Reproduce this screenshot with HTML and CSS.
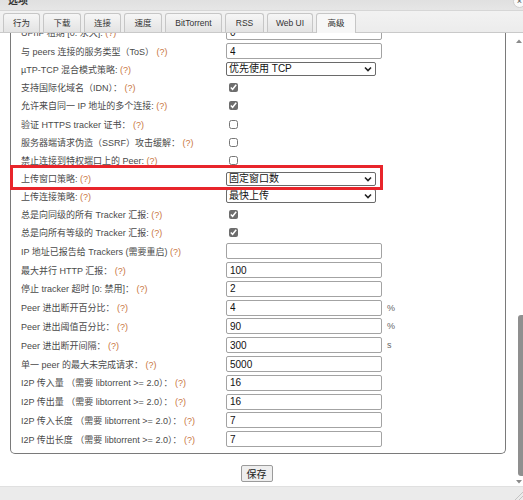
FILE: index.html
```html
<!DOCTYPE html>
<html lang="zh-CN">
<head>
<meta charset="utf-8">
<title>选项</title>
<link rel="stylesheet" href="styles.css">
</head>
<body>
<div class="window">
  <div class="titlebar"><span class="title">选项</span></div>
  <div class="close">×</div>
  <div class="tabbar">
    <div class="tab w37">行为</div>
    <div class="tab w38">下载</div>
    <div class="tab w37">连接</div>
    <div class="tab w38">速度</div>
    <div class="tab w57">BitTorrent</div>
    <div class="tab w39">RSS</div>
    <div class="tab w46">Web UI</div>
    <div class="tab w40 active">高级</div>
  </div>
  <div class="main">
    <div class="scrollarea">
      <div class="inner">
        <div class="fieldset">
          <div class="row r-in"><div class="lbl">UPnP 租期 [0: 永久]: <span class="q">(?)</span></div><div class="ctl"><input class="txt" type="text" value="0"></div></div>
          <div class="row r-in"><div class="lbl">与 peers 连接的服务类型（ToS） <span class="q">(?)</span></div><div class="ctl"><input class="txt" type="text" value="4"></div></div>
          <div class="row r-sel"><div class="lbl">µTP-TCP 混合模式策略: <span class="q">(?)</span></div><div class="ctl"><div class="selwrap"><select class="sel"><option>优先使用 TCP</option></select><svg class="chev" width="8" height="6" viewBox="0 0 8 6"><path d="M1 1.5 L4 4.5 L7 1.5" fill="none" stroke="#222" stroke-width="1.6"/></svg></div></div></div>
          <div class="row r-cb"><div class="lbl">支持国际化域名（IDN）： <span class="q">(?)</span></div><div class="ctl"><input class="cb" type="checkbox" checked></div></div>
          <div class="row r-cb"><div class="lbl">允许来自同一 IP 地址的多个连接: <span class="q">(?)</span></div><div class="ctl"><input class="cb" type="checkbox" checked></div></div>
          <div class="row r-cb"><div class="lbl">验证 HTTPS tracker 证书： <span class="q">(?)</span></div><div class="ctl"><input class="cb" type="checkbox"></div></div>
          <div class="row r-cb"><div class="lbl">服务器端请求伪造（SSRF）攻击缓解： <span class="q">(?)</span></div><div class="ctl"><input class="cb" type="checkbox"></div></div>
          <div class="row r-cb"><div class="lbl">禁止连接到特权端口上的 Peer: <span class="q">(?)</span></div><div class="ctl"><input class="cb" type="checkbox"></div></div>
          <div class="row r-sel"><div class="lbl">上传窗口策略: <span class="q">(?)</span></div><div class="ctl"><div class="selwrap"><select class="sel"><option>固定窗口数</option></select><svg class="chev" width="8" height="6" viewBox="0 0 8 6"><path d="M1 1.5 L4 4.5 L7 1.5" fill="none" stroke="#222" stroke-width="1.6"/></svg></div></div></div>
          <div class="row r-sel"><div class="lbl">上传连接策略: <span class="q">(?)</span></div><div class="ctl"><div class="selwrap"><select class="sel"><option>最快上传</option></select><svg class="chev" width="8" height="6" viewBox="0 0 8 6"><path d="M1 1.5 L4 4.5 L7 1.5" fill="none" stroke="#222" stroke-width="1.6"/></svg></div></div></div>
          <div class="row r-cb"><div class="lbl">总是向同级的所有 Tracker 汇报: <span class="q">(?)</span></div><div class="ctl"><input class="cb" type="checkbox" checked></div></div>
          <div class="row r-cb"><div class="lbl">总是向所有等级的 Tracker 汇报: <span class="q">(?)</span></div><div class="ctl"><input class="cb" type="checkbox" checked></div></div>
          <div class="row r-in"><div class="lbl">IP 地址已报告给 Trackers (需要重启) <span class="q">(?)</span></div><div class="ctl"><input class="txt" type="text" value=""></div></div>
          <div class="row r-in"><div class="lbl">最大并行 HTTP 汇报： <span class="q">(?)</span></div><div class="ctl"><input class="txt" type="text" value="100"></div></div>
          <div class="row r-in"><div class="lbl">停止 tracker 超时 [0: 禁用]： <span class="q">(?)</span></div><div class="ctl"><input class="txt" type="text" value="2"></div></div>
          <div class="row r-in"><div class="lbl">Peer 进出断开百分比： <span class="q">(?)</span></div><div class="ctl"><input class="txt" type="text" value="4"><span class="unit">%</span></div></div>
          <div class="row r-in"><div class="lbl">Peer 进出阈值百分比： <span class="q">(?)</span></div><div class="ctl"><input class="txt" type="text" value="90"><span class="unit">%</span></div></div>
          <div class="row r-in"><div class="lbl">Peer 进出断开间隔： <span class="q">(?)</span></div><div class="ctl"><input class="txt" type="text" value="300"><span class="unit">s</span></div></div>
          <div class="row r-in"><div class="lbl">单一 peer 的最大未完成请求： <span class="q">(?)</span></div><div class="ctl"><input class="txt" type="text" value="5000"></div></div>
          <div class="row r-in"><div class="lbl">I2P 传入量 （需要 libtorrent &gt;= 2.0）： <span class="q">(?)</span></div><div class="ctl"><input class="txt" type="text" value="16"></div></div>
          <div class="row r-in"><div class="lbl">I2P 传出量 （需要 libtorrent &gt;= 2.0）： <span class="q">(?)</span></div><div class="ctl"><input class="txt" type="text" value="16"></div></div>
          <div class="row r-in"><div class="lbl">I2P 传入长度 （需要 libtorrent &gt;= 2.0）： <span class="q">(?)</span></div><div class="ctl"><input class="txt" type="text" value="7"></div></div>
          <div class="row r-in"><div class="lbl">I2P 传出长度 （需要 libtorrent &gt;= 2.0）： <span class="q">(?)</span></div><div class="ctl"><input class="txt" type="text" value="7"></div></div>
        </div>
        <div class="actions"><button class="save" type="button">保存</button></div>
      </div>
    </div>
    <div class="scrollbar">
      <svg class="arrow" width="10" height="8" viewBox="0 0 10 8"><path d="M2 6 L5 2.5 L8 6 Z" fill="#8a8a8a"/></svg>
      <div class="track"><div class="thumb"></div></div>
      <svg class="arrow" width="10" height="8" viewBox="0 0 10 8"><path d="M2 2 L5 5.5 L8 2 Z" fill="#8a8a8a"/></svg>
    </div>
  </div>
  <div class="footer">
    <svg class="grip" width="10" height="10" viewBox="0 0 10 10"><path d="M10 2 L2 10 M10 6 L6 10" stroke="#c4c4c4" stroke-width="1"/></svg>
  </div>
  <div class="highlight"></div>
</div>
</body>
</html>
```

FILE: styles.css
```css
html, body {
  margin: 0;
  padding: 0;
}
body {
  font-family: "Liberation Sans", "Noto Sans CJK SC", sans-serif;
  background: #fff;
}
.window {
  position: relative;
  width: 523px;
  height: 500px;
  overflow: hidden;
  background: #fff;
  display: flex;
  flex-direction: column;
}
.titlebar {
  height: 10px;
  flex: none;
  overflow: hidden;
  background: linear-gradient(#e0e0e0, #e6e6e6);
  border-bottom: 1px solid #d6d6d6;
}
.title {
  display: block;
  margin: -5px 0 0 8px;
  font-size: 10px;
  line-height: 12px;
  font-weight: bold;
  color: #333;
}
.close {
  position: absolute;
  right: -3px;
  top: -5px;
  width: 11px;
  height: 11px;
  border-radius: 50%;
  background: #fafafa;
  border: 1px solid #cfcfcf;
  font-size: 9px;
  line-height: 11px;
  text-align: center;
  color: #555;
}
.tabbar {
  flex: none;
  height: 19px;
  padding: 2px 0 0 3px;
  display: flex;
  gap: 3px;
  align-items: flex-end;
  background: linear-gradient(#f2f2f2, #ececec);
  border-bottom: 1px solid #c9c9c9;
}
.tab {
  box-sizing: border-box;
  height: 19px;
  border: 1px solid #c6c6c6;
  border-bottom: none;
  border-radius: 3px 3px 0 0;
  background: linear-gradient(#f6f6f6, #e3e3e3);
  font-size: 8.5px;
  line-height: 18px;
  text-align: center;
  color: #333;
}
.tab.active {
  background: #f7f7f7;
  margin-bottom: -1px;
  height: 20px;
}
.w37 { width: 37px; }
.w38 { width: 38px; }
.w39 { width: 39px; }
.w40 { width: 40px; }
.w46 { width: 46px; }
.w57 { width: 57px; }
.main {
  flex: none;
  height: 453px;
  display: flex;
}
.scrollarea {
  width: 513px;
  flex: none;
  overflow: hidden;
}
.inner {
  margin-top: -10px;
}
.fieldset {
  margin: 0 7px 0 10px;
  border: 1px solid #7a7a7a;
  border-top: none;
  border-radius: 0 0 5px 5px;
  padding: 0 0 4px 10px;
}
.row {
  display: flex;
  align-items: center;
}
.r-in { height: 18.8px; }
.r-sel { height: 17.5px; }
.r-cb { height: 18.4px; }
.lbl {
  width: 205px;
  flex: none;
  white-space: nowrap;
  font-size: 9px;
  color: #4a4a4a;
}
.q {
  color: #c8743e;
}
.ctl {
  display: flex;
  align-items: center;
  gap: 5px;
}
.txt {
  box-sizing: border-box;
  width: 156px;
  height: 16px;
  margin: 0;
  padding: 0 3px;
  border: 1px solid #a3a3a3;
  border-radius: 2px;
  font-family: "Liberation Sans", "Noto Sans CJK SC", sans-serif;
  font-size: 10px;
  color: #111;
  background: #fff;
}
.selwrap {
  position: relative;
  width: 150px;
  height: 14px;
}
.sel {
  appearance: none;
  -webkit-appearance: none;
  display: block;
  box-sizing: border-box;
  width: 150px;
  height: 14px;
  margin: 0;
  padding: 0 12px 0 2px;
  border: 1px solid #6a6a6a;
  border-radius: 2px;
  font-family: "Liberation Sans", "Noto Sans CJK SC", sans-serif;
  font-size: 10px;
  line-height: 12px;
  color: #111;
  background: #fff;
}
.chev {
  position: absolute;
  right: 4px;
  top: 4px;
  pointer-events: none;
}
.cb {
  width: 9px;
  height: 9px;
  margin: 0 0 0 3px;
  accent-color: #6d6d6d;
}
.unit {
  font-size: 9px;
  color: #666;
}
.actions {
  padding-top: 10px;
  text-align: center;
}
.save {
  box-sizing: border-box;
  width: 32px;
  height: 17px;
  margin: 0;
  padding: 0;
  border: 1px solid #9b9b9b;
  border-radius: 2px;
  background: #eeeeee;
  font-family: "Noto Sans CJK SC", "Liberation Sans", sans-serif;
  font-size: 10px;
  line-height: 15px;
  color: #222;
}
.scrollbar {
  width: 10px;
  flex: none;
  display: flex;
  flex-direction: column;
  background: #fff;
}
.arrow {
  flex: none;
  display: block;
  margin-left: 1px;
}
.scrollbar .arrow:first-child {
  margin-top: 4px;
}
.track {
  flex: 1;
  display: flex;
  flex-direction: column;
  justify-content: flex-end;
  padding-bottom: 2px;
}
.thumb {
  width: 8px;
  height: 161px;
  margin-left: 5px;
  border-radius: 3px;
  background: #8f8f8f;
}
.footer {
  flex: 1;
  background: #ebebeb;
  border-top: 1px solid #e0e0e0;
  display: flex;
  justify-content: flex-end;
  align-items: flex-end;
}
.grip {
  display: block;
}
.highlight {
  position: absolute;
  left: 10px;
  top: 165px;
  width: 367px;
  height: 19px;
  border: 3px solid #e8252b;
}
```
